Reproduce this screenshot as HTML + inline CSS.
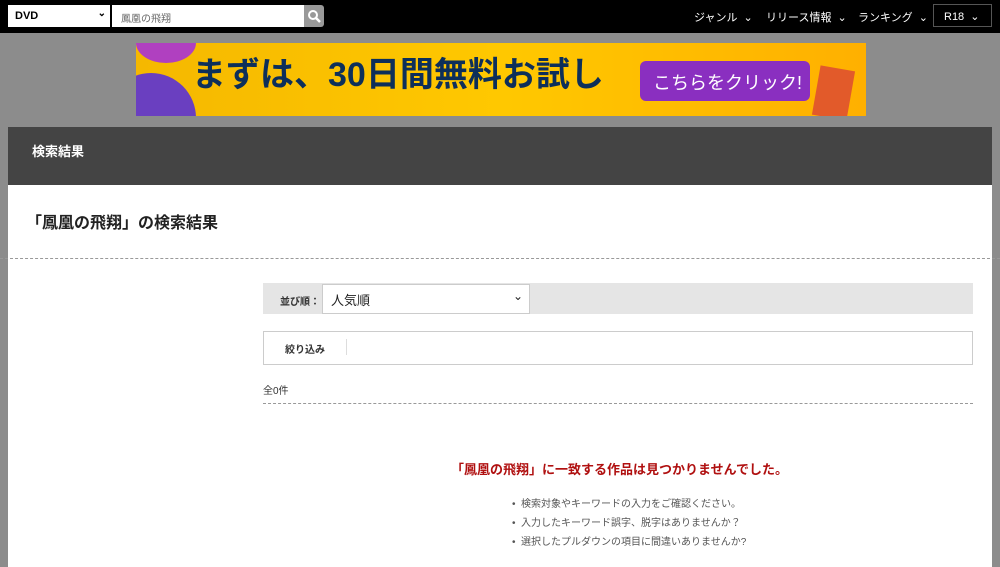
<!DOCTYPE html>
<html><head><meta charset="utf-8"><style>
*{margin:0;padding:0;box-sizing:border-box}
body{width:1000px;height:557px;overflow:hidden;background:#8c8c8c;font-family:"Liberation Sans","Noto Sans CJK JP",sans-serif;position:relative}
.top{position:absolute;left:0;top:0;width:1000px;height:33px;background:#000}
.sel{position:absolute;left:8px;top:5px;width:102px;height:22px;background:#fff;font-size:11px;font-weight:bold;padding:5px 0 0 7px}
.srch{position:absolute;left:112px;top:5px;width:192px;height:22px;background:#fff;font-size:10px;color:#666;padding:5px 0 0 9px}
.sbtn{position:absolute;left:304px;top:5px;width:20px;height:22px;background:#999;border-radius:0 3px 3px 0}
.nav{position:absolute;top:9px;color:#fff;font-size:11px;white-space:nowrap}
.r18{position:absolute;left:933px;top:4px;width:59px;height:23px;border:1px solid #555;color:#fff;font-size:11px;padding:5px 0 0 10px}
.banner{position:absolute;left:136px;top:43px;width:730px;height:73px;background:linear-gradient(90deg,#f5b800,#ffc800 50%,#ffb000);overflow:hidden}
.panel{position:absolute;left:8px;top:127px;width:984px;height:440px;background:#fff}
.ph{height:58px;background:#444;color:#fff;font-size:13px;font-weight:bold;padding:14px 0 0 24px}
</style></head><body>
<div class="top"></div>
<div class="sel">DVD<span style="position:absolute;right:4px;top:3px;font-size:10px">&#8964;</span></div>
<div class="srch">鳳凰の飛翔</div>
<div class="sbtn"><svg width="20" height="22"><circle cx="9" cy="10" r="4" stroke="#fff" stroke-width="2" fill="none"/><path d="M12 13l4 4" stroke="#fff" stroke-width="2.5"/></svg></div>
<div class="nav" style="left:694px">ジャンル&nbsp; ⌄</div>
<div class="nav" style="left:766px">リリース情報&nbsp; ⌄</div>
<div class="nav" style="left:858px">ランキング&nbsp; ⌄</div>
<div class="r18">R18&nbsp; ⌄</div>
<div class="banner">
<div style="position:absolute;left:-30px;top:30px;width:90px;height:90px;border-radius:50%;background:#6a3fc0"></div>
<div style="position:absolute;left:0;top:-20px;width:60px;height:40px;border-radius:50%;background:#b040c0"></div>
<div style="position:absolute;left:56px;top:12px;font-size:34px;font-weight:bold;color:#0d2f5a;white-space:nowrap;line-height:1.2">まずは、30日間無料お試し</div>
<div style="position:absolute;left:504px;top:18px;width:170px;height:40px;border-radius:6px;background:#8a2fc0;color:#fff;font-size:18px;padding:8px 0 0 13px;white-space:nowrap">こちらをクリック!</div>
<div style="position:absolute;left:680px;top:25px;width:35px;height:50px;background:#e25a2a;transform:rotate(10deg)"></div>
</div>
<div class="panel">
<div class="ph">検索結果</div>
<div style="position:absolute;left:18px;top:82px;font-size:16px;font-weight:bold;color:#222">「鳳凰の飛翔」の検索結果</div>
</div>
<div style="position:absolute;left:0;top:258px;width:1000px;border-top:1px dashed #999"></div>
<div style="position:absolute;left:263px;top:283px;width:710px;height:31px;background:#e5e5e5"></div>
<div style="position:absolute;left:280px;top:293px;font-size:10px;font-weight:bold;color:#333">並び順：</div>
<div style="position:absolute;left:322px;top:284px;width:208px;height:30px;background:#fff;border:1px solid #ccc;font-size:13px;padding:5px 0 0 8px;color:#222">人気順<span style="position:absolute;right:6px;top:4px;font-size:12px">&#8964;</span></div>
<div style="position:absolute;left:263px;top:331px;width:710px;height:34px;border:1px solid #ccc"></div>
<div style="position:absolute;left:285px;top:341px;font-size:10px;font-weight:bold;color:#333">絞り込み</div>
<div style="position:absolute;left:346px;top:339px;height:16px;border-left:1px solid #ddd"></div>
<div style="position:absolute;left:263px;top:382px;font-size:10px;color:#333">全0件</div>
<div style="position:absolute;left:263px;top:403px;width:710px;border-top:1px dashed #999"></div>
<div style="position:absolute;left:451px;top:459px;font-size:13px;font-weight:bold;color:#b01010">「鳳凰の飛翔」に一致する作品は見つかりませんでした。</div>
<div style="position:absolute;left:512px;top:495px;font-size:10px;color:#555;line-height:19px">•&nbsp;&nbsp;検索対象やキーワードの入力をご確認ください。<br>•&nbsp;&nbsp;入力したキーワード誤字、脱字はありませんか？<br>•&nbsp;&nbsp;選択したプルダウンの項目に間違いありませんか?</div>
</body></html>
